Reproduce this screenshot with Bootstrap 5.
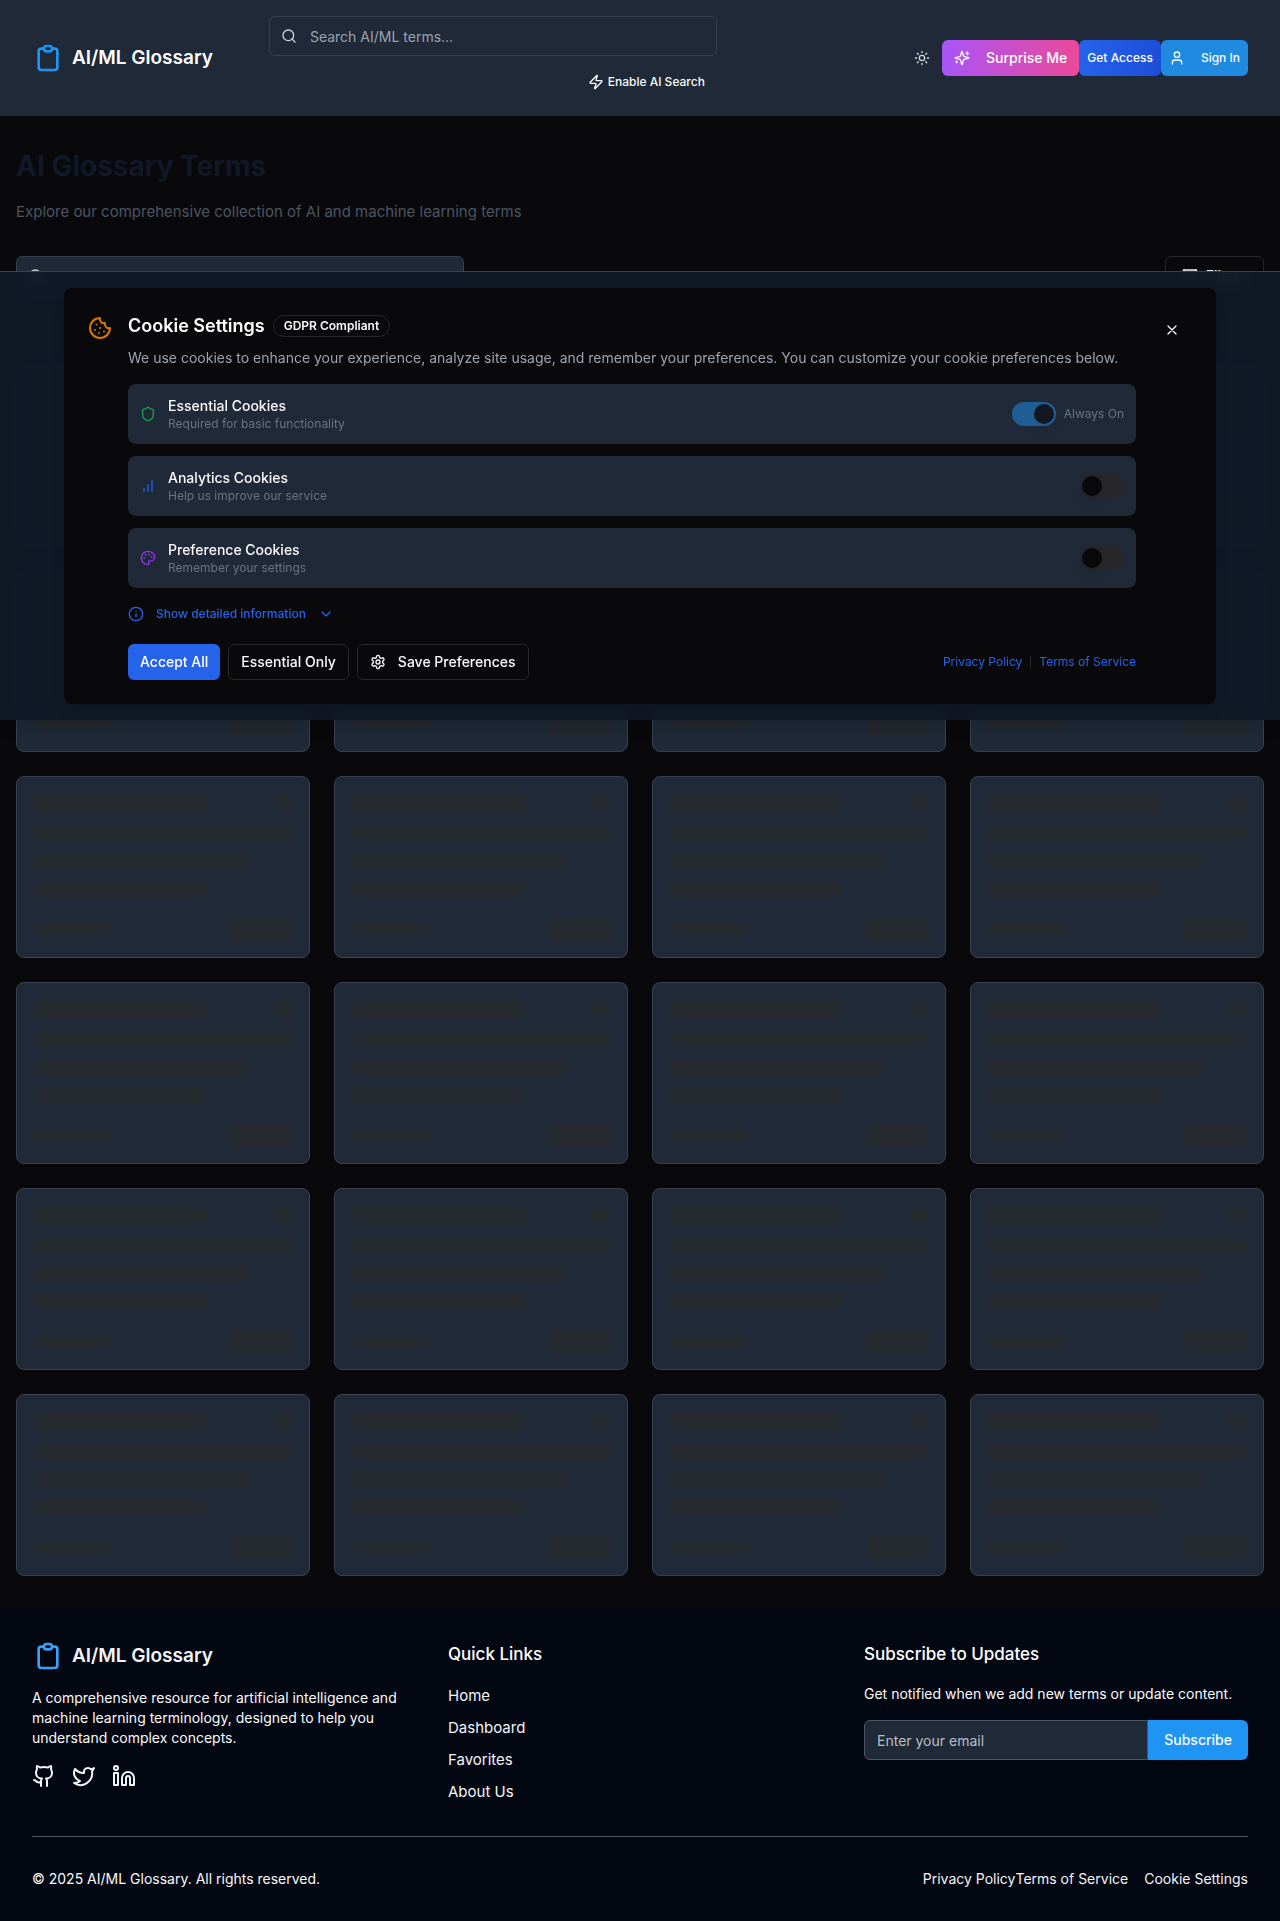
<!DOCTYPE html>
<html lang="en" data-bs-theme="dark">
<head>
<meta charset="utf-8">
<meta name="viewport" content="width=device-width, initial-scale=1">
<title>AI/ML Glossary</title>
<link href="https://cdn.jsdelivr.net/npm/bootstrap@5.3.0/dist/css/bootstrap.min.css" rel="stylesheet">
<style>
  body { background: #09090b; color: #fafafa; font-family: Inter, sans-serif; font-size: 15px; line-height: 24px; }
  a { text-decoration: none; }
  .ico { width: 16px; height: 16px; flex: none; fill: none; stroke: currentColor; stroke-width: 2; stroke-linecap: round; stroke-linejoin: round; }
  .ico-lg { width: 24px; height: 24px; }
  .ico-logo { width: 32px; height: 32px; color: #2094f3; }
  .gap-12 { gap: 12px; }
  .text-slate { color: #111827; }
  .text-dim { color: #4b5563; }
  .text-soft { color: #6b7280; }
  .text-calm { color: #9ca3af; }
  .site-header { background: #1f2937; padding: 16px 32px; }
  .header-search { flex: 0 1 448px; margin-left: 56px; }
  .search-box { position: relative; max-width: 448px; color: #d1d5db; }
  .search-box .ico { position: absolute; left: 12px; top: 12px; }
  .field { background: #1f2937; border: 1px solid #374151; border-radius: 6px; color: #fafafa; height: 40px; font-size: 14px; line-height: 20px; padding: 8px 12px; }
  .field:focus { background: #1f2937; }
  .search-box .field { padding-left: 40px; }
  .field::placeholder { color: #9ca3af; }
  .tool { display: inline-flex; align-items: center; justify-content: center; height: 36px; padding: 0 12px; border-radius: 6px; border: 0; background: none; color: #fafafa; font-size: 14px; line-height: 20px; font-weight: 500; white-space: nowrap; }
  .tool-sm { font-size: 12px; padding: 0 8px; }
  .tool-theme { color: #d1d5db; }
  .tool-line { border: 1px solid #27272a; }
  .tool-surprise { background: linear-gradient(90deg, #a855f7, #ec4899); color: #fff; }
  .tool-access { background: linear-gradient(90deg, #2563eb, #1d4ed8); color: #fff; }
  .tool-sign { background: #208ae0; color: #f8fafc; }
  .tool-accept { background: #2563eb; color: #fff; }
  .t12 { font-size: 12px; line-height: 16px; }
  .t14 { font-size: 14px; line-height: 20px; }
  .t17 { font-size: 17px; line-height: 28px; }
  .t18 { font-size: 18px; line-height: 28px; }
  .t19 { font-size: 19px; line-height: 28px; }
  .t28 { font-size: 28px; line-height: 36px; }
  .page-main { padding: 32px 16px; }
  .toolbar { margin-bottom: 68px; }
  .term-card { background: #1f2937; border: 1px solid #374151; border-radius: 8px; padding: 16px; }
  .bone { background: #24282f; border-radius: 6px; height: 16px; }
  .bone-title { height: 20px; width: 67%; }
  .bone-dot { height: 20px; width: 20px; border-radius: 50%; }
  .bone-long { width: 83%; }
  .bone-mid { width: 67%; }
  .bone-tag { height: 12px; width: 80px; }
  .bone-btn { height: 24px; width: 64px; }
  .bone-foot { margin-top: 8px; }
  .consent { position: absolute; top: 271px; left: 0; right: 0; z-index: 10; padding: 16px; border-top: 1px solid #374151; background: rgba(17, 24, 39, .95); backdrop-filter: blur(8px); box-shadow: 0 10px 15px -3px rgba(0, 0, 0, .1); }
  .consent-panel { max-width: 1152px; background: #09090b; border-radius: 8px; padding: 24px; box-shadow: 0 10px 15px -3px rgba(0, 0, 0, .1); }
  .pill { border: 1px solid #27272a; border-radius: 999px; padding: 2px 10px; font-weight: 600; }
  .option { background: #1f2937; border-radius: 8px; padding: 12px; }
  .switch { appearance: none; width: 44px; height: 24px; margin: 0; padding: 2px; border-radius: 12px; background: #27272a; display: flex; flex: none; }
  .switch::before { content: ""; width: 20px; height: 20px; border-radius: 50%; background: #09090b; box-shadow: 0 10px 15px -3px rgba(0, 0, 0, .1); }
  .switch:checked { background: #2094f3; justify-content: flex-end; }
  .switch:disabled { opacity: .5; }
  .c-orange { color: #d97706; } .c-green { color: #16a34a; } .c-blue { color: #2563eb; } .c-purple { color: #9333ea; }
  .details-btn { height: 28px; }
  .bar { width: 1px; height: 12px; background: #27272a; }
  .site-footer { background: #030712; padding: 32px; }
  .foot-cols { --bs-gutter-x: 32px; }
  .site-footer a { color: #f3f4f6; }
  .site-footer .ico-logo { color: #3ba0f5; }
  .foot-field { background: #1f2937; border-color: #4b5563; border-radius: 6px 0 0 6px; }
  .foot-field::placeholder { color: #b9bec7; }
  .foot-btn { height: 40px; padding: 0 16px; border-radius: 0 6px 6px 0; background: #2094f3; color: #f8fafc; }
  .foot-end { border-top: 1px solid #4b5563; margin-top: 32px; padding-top: 32px; }
</style>
</head>
<body>
<svg class="d-none" xmlns="http://www.w3.org/2000/svg">
  <symbol id="i-clip" viewBox="0 0 24 24"><path d="M9 5H7a2 2 0 0 0-2 2v12a2 2 0 0 0 2 2h10a2 2 0 0 0 2-2V7a2 2 0 0 0-2-2h-2M9 5a2 2 0 0 0 2 2h2a2 2 0 0 0 2-2M9 5a2 2 0 0 1 2-2h2a2 2 0 0 1 2 2"/></symbol>
  <symbol id="i-search" viewBox="0 0 24 24"><circle cx="11" cy="11" r="8"/><path d="m21 21-4.300-4.300"/></symbol>
  <symbol id="i-zap" viewBox="0 0 24 24"><path d="M4 14a1 1 0 0 1-.78-1.630l9.900-10.200a.5.5 0 0 1 .86.46l-1.920 6.020A1 1 0 0 0 13 10h7a1 1 0 0 1 .78 1.630l-9.900 10.200a.5.5 0 0 1-.86-.46l1.920-6.020A1 1 0 0 0 11 14z"/></symbol>
  <symbol id="i-sun" viewBox="0 0 24 24"><circle cx="12" cy="12" r="4"/><path d="M12 2v2M12 20v2M4.930 4.930l1.410 1.410M17.660 17.660l1.410 1.410M2 12h2M20 12h2M6.340 17.660l-1.410 1.410M19.070 4.930l-1.410 1.410"/></symbol>
  <symbol id="i-spark" viewBox="0 0 24 24"><path d="M9.937 15.500A2 2 0 0 0 8.500 14.063l-6.135-1.582a.5.5 0 0 1 0-.962L8.500 9.936A2 2 0 0 0 9.937 8.500l1.582-6.135a.5.5 0 0 1 .963 0L14.063 8.500A2 2 0 0 0 15.500 9.937l6.135 1.581a.5.5 0 0 1 0 .964L15.500 14.063a2 2 0 0 0-1.437 1.437l-1.582 6.135a.5.5 0 0 1-.963 0zM20 3v4M22 5h-4M4 17v2M5 18H3"/></symbol>
  <symbol id="i-user" viewBox="0 0 24 24"><path d="M19 21v-2a4 4 0 0 0-4-4H9a4 4 0 0 0-4 4v2"/><circle cx="12" cy="7" r="4"/></symbol>
  <symbol id="i-filter" viewBox="0 0 24 24"><path d="M22 3H2l8 9.460V19l4 2v-8.540z"/></symbol>
  <symbol id="i-cookie" viewBox="0 0 24 24"><path d="M12 2a10 10 0 1 0 10 10 4 4 0 0 1-5-5 4 4 0 0 1-5-5M8.500 8.500v.01M16 15.500v.01M12 12v.01M11 17v.01M7 14v.01"/></symbol>
  <symbol id="i-x" viewBox="0 0 24 24"><path d="M18 6 6 18M6 6l12 12"/></symbol>
  <symbol id="i-shield" viewBox="0 0 24 24"><path d="M20 13c0 5-3.500 7.500-7.660 8.950a1 1 0 0 1-.67-.01C7.500 20.500 4 18 4 13V6a1 1 0 0 1 1-1c2 0 4.500-1.200 6.240-2.720a1.170 1.170 0 0 1 1.520 0C14.510 3.810 17 5 19 5a1 1 0 0 1 1 1z"/></symbol>
  <symbol id="i-chart" viewBox="0 0 24 24"><path d="M12 20V10M18 20V4M6 20v-4"/></symbol>
  <symbol id="i-palette" viewBox="0 0 24 24"><circle cx="13.5" cy="6.5" r=".5"/><circle cx="17.5" cy="10.5" r=".5"/><circle cx="8.5" cy="7.5" r=".5"/><circle cx="6.5" cy="12.5" r=".5"/><path d="M12 2C6.500 2 2 6.500 2 12s4.500 10 10 10c.926 0 1.648-.746 1.648-1.688 0-.437-.18-.835-.437-1.125-.29-.289-.438-.652-.438-1.125a1.640 1.640 0 0 1 1.668-1.668h1.996c3.051 0 5.555-2.503 5.555-5.554C21.965 6.012 17.461 2 12 2z"/></symbol>
  <symbol id="i-info" viewBox="0 0 24 24"><circle cx="12" cy="12" r="10"/><path d="M12 16v-4M12 8h.01"/></symbol>
  <symbol id="i-down" viewBox="0 0 24 24"><path d="m6 9 6 6 6-6"/></symbol>
  <symbol id="i-gear" viewBox="0 0 24 24"><path d="M12.220 2h-.44a2 2 0 0 0-2 2v.18a2 2 0 0 1-1 1.730l-.43.25a2 2 0 0 1-2 0l-.15-.08a2 2 0 0 0-2.730.73l-.22.38a2 2 0 0 0 .73 2.730l.15.1a2 2 0 0 1 1 1.720v.51a2 2 0 0 1-1 1.740l-.15.09a2 2 0 0 0-.73 2.730l.22.38a2 2 0 0 0 2.730.73l.15-.08a2 2 0 0 1 2 0l.43.25a2 2 0 0 1 1 1.730V20a2 2 0 0 0 2 2h.44a2 2 0 0 0 2-2v-.18a2 2 0 0 1 1-1.730l.43-.25a2 2 0 0 1 2 0l.15.08a2 2 0 0 0 2.730-.73l.22-.39a2 2 0 0 0-.73-2.730l-.15-.08a2 2 0 0 1-1-1.740v-.5a2 2 0 0 1 1-1.740l.15-.09a2 2 0 0 0 .73-2.730l-.22-.38a2 2 0 0 0-2.730-.73l-.15.08a2 2 0 0 1-2 0l-.43-.25a2 2 0 0 1-1-1.730V4a2 2 0 0 0-2-2z"/><circle cx="12" cy="12" r="3"/></symbol>
  <symbol id="i-github" viewBox="0 0 24 24"><path d="M15 22v-4a4.800 4.800 0 0 0-1-3.500c3 0 6-2 6-5.500.08-1.250-.27-2.480-1-3.500.28-1.150.28-2.350 0-3.500 0 0-1 0-3 1.500-2.640-.5-5.360-.5-8 0C6 2 5 2 5 2c-.3 1.150-.3 2.350 0 3.500A5.403 5.403 0 0 0 4 9c0 3.500 3 5.500 6 5.500-.39.49-.68 1.050-.85 1.650-.17.6-.22 1.230-.15 1.850v4M9 18c-4.510 2-5-2-7-2"/></symbol>
  <symbol id="i-twitter" viewBox="0 0 24 24"><path d="M22 4s-.7 2.100-2 3.400c1.600 10-9.400 17.300-18 11.600 2.200.1 4.400-.6 6-2C3 15.500.5 9.600 3 5c2.200 2.600 5.600 4.100 9 4-.9-4.200 4-6.600 7-3.800 1.100 0 3-1.200 3-1.200z"/></symbol>
  <symbol id="i-linkedin" viewBox="0 0 24 24"><path d="M16 8a6 6 0 0 1 6 6v7h-4v-7a2 2 0 0 0-4 0v7h-4v-7a6 6 0 0 1 6-6z"/><path d="M2 9h4v12H2z"/><circle cx="4" cy="4" r="2"/></symbol>
</svg>

<header class="site-header d-flex align-items-center">
  <a href="#" class="d-flex align-items-center gap-2 text-white t19 fw-semibold text-nowrap"><svg class="ico ico-logo"><use href="#i-clip"/></svg>AI/ML Glossary</a>
  <div class="header-search">
    <div class="search-box">
      <svg class="ico"><use href="#i-search"/></svg>
      <input type="search" class="form-control field" placeholder="Search AI/ML terms..." aria-label="Search AI/ML terms">
    </div>
    <div class="d-flex justify-content-end mt-2">
      <button type="button" class="tool t12 gap-1"><svg class="ico"><use href="#i-zap"/></svg>Enable AI Search</button>
    </div>
  </div>
  <div class="d-flex align-items-center ms-auto">
    <button type="button" class="tool tool-theme" aria-label="Toggle theme"><svg class="ico"><use href="#i-sun"/></svg></button>
    <button type="button" class="tool tool-surprise gap-3"><svg class="ico"><use href="#i-spark"/></svg>Surprise Me</button>
    <button type="button" class="tool tool-sm tool-access">Get Access</button>
    <button type="button" class="tool tool-sm tool-sign gap-3"><svg class="ico"><use href="#i-user"/></svg>Sign In</button>
  </div>
</header>

<main class="page-main">
  <h1 class="t28 fw-bold text-slate mb-3">AI Glossary Terms</h1>
  <p class="text-dim mb-0 pb-2">Explore our comprehensive collection of AI and machine learning terms</p>
  <div class="toolbar d-flex justify-content-between mt-4">
    <div class="search-box flex-fill">
      <svg class="ico"><use href="#i-search"/></svg>
      <input type="search" class="form-control field" aria-label="Search terms">
    </div>
    <button type="button" class="tool tool-line px-3 gap-2 h-auto"><svg class="ico"><use href="#i-filter"/></svg>Filters</button>
  </div>
  <div class="row row-cols-1 row-cols-sm-2 row-cols-lg-4 g-4" id="cards"></div>
</main>

<section class="consent" aria-label="Cookie Settings">
  <div class="consent-panel mx-auto d-flex align-items-start gap-3">
    <svg class="ico ico-lg c-orange mt-1"><use href="#i-cookie"/></svg>
    <div class="flex-fill">
      <div class="d-flex align-items-center gap-2 mb-2">
        <h2 class="t18 fw-semibold mb-0">Cookie Settings</h2>
        <span class="pill t12">GDPR Compliant</span>
      </div>
      <p class="t14 text-calm mb-3">We use cookies to enhance your experience, analyze site usage, and remember your preferences. You can customize your cookie preferences below.</p>
      <div class="d-flex flex-column gap-12">
        <div class="option d-flex align-items-center gap-12">
          <svg class="ico c-green"><use href="#i-shield"/></svg>
          <label for="ck-essential" class="flex-fill"><span class="d-block t14 fw-medium">Essential Cookies</span><span class="d-block t12 text-soft">Required for basic functionality</span></label>
          <div class="d-flex align-items-center gap-2"><input type="checkbox" role="switch" class="switch" id="ck-essential" checked disabled><span class="t12 text-soft">Always On</span></div>
        </div>
        <div class="option d-flex align-items-center gap-12">
          <svg class="ico c-blue"><use href="#i-chart"/></svg>
          <label for="ck-analytics" class="flex-fill"><span class="d-block t14 fw-medium">Analytics Cookies</span><span class="d-block t12 text-soft">Help us improve our service</span></label>
          <input type="checkbox" role="switch" class="switch" id="ck-analytics">
        </div>
        <div class="option d-flex align-items-center gap-12">
          <svg class="ico c-purple"><use href="#i-palette"/></svg>
          <label for="ck-preference" class="flex-fill"><span class="d-block t14 fw-medium">Preference Cookies</span><span class="d-block t12 text-soft">Remember your settings</span></label>
          <input type="checkbox" role="switch" class="switch" id="ck-preference">
        </div>
        <button type="button" class="tool t12 details-btn c-blue px-0 gap-12 align-self-start"><svg class="ico"><use href="#i-info"/></svg>Show detailed information<svg class="ico"><use href="#i-down"/></svg></button>
      </div>
      <div class="d-flex flex-wrap align-items-center gap-2 mt-3">
        <button type="button" class="tool tool-accept">Accept All</button>
        <button type="button" class="tool tool-line">Essential Only</button>
        <button type="button" class="tool tool-line gap-12"><svg class="ico"><use href="#i-gear"/></svg>Save Preferences</button>
        <div class="d-flex align-items-center gap-2 t12 ms-auto"><a href="#" class="c-blue">Privacy Policy</a><span class="bar"></span><a href="#" class="c-blue">Terms of Service</a></div>
      </div>
    </div>
    <button type="button" class="tool" aria-label="Close"><svg class="ico"><use href="#i-x"/></svg></button>
  </div>
</section>

<footer class="site-footer">
  <div class="foot-cols row row-cols-1 row-cols-md-3">
    <div class="col">
      <a href="#" class="d-flex align-items-center gap-2 t19 fw-semibold mb-3"><svg class="ico ico-logo"><use href="#i-clip"/></svg>AI/ML Glossary</a>
      <p class="t14 mb-3">A comprehensive resource for artificial intelligence and machine learning terminology, designed to help you understand complex concepts.</p>
      <div class="d-flex gap-3">
        <a href="#" class="d-flex" aria-label="GitHub"><svg class="ico ico-lg"><use href="#i-github"/></svg></a>
        <a href="#" class="d-flex" aria-label="Twitter"><svg class="ico ico-lg"><use href="#i-twitter"/></svg></a>
        <a href="#" class="d-flex" aria-label="LinkedIn"><svg class="ico ico-lg"><use href="#i-linkedin"/></svg></a>
      </div>
    </div>
    <div class="col">
      <h3 class="t17 fw-medium mb-3">Quick Links</h3>
      <ul class="list-unstyled d-flex flex-column gap-2 mb-0">
        <li><a href="#">Home</a></li>
        <li><a href="#">Dashboard</a></li>
        <li><a href="#">Favorites</a></li>
        <li><a href="#">About Us</a></li>
      </ul>
    </div>
    <div class="col">
      <h3 class="t17 fw-medium mb-3">Subscribe to Updates</h3>
      <p class="t14 mb-3">Get notified when we add new terms or update content.</p>
      <form class="d-flex">
        <input type="email" class="form-control field foot-field" placeholder="Enter your email" aria-label="Email address">
        <button type="button" class="tool foot-btn">Subscribe</button>
      </form>
    </div>
  </div>
  <div class="foot-end t14 d-flex flex-wrap justify-content-between">
    <span>© 2025 AI/ML Glossary. All rights reserved.</span>
    <div class="d-flex"><a href="#">Privacy Policy</a><a href="#">Terms of Service</a><a href="#" class="ms-3">Cookie Settings</a></div>
  </div>
</footer>

<script src="https://cdn.jsdelivr.net/npm/bootstrap@5.3.0/dist/js/bootstrap.bundle.min.js"></script>
<script>
  // Placeholder cards shown while the terms load
  document.getElementById('cards').innerHTML = Array(24).fill(`
    <div class="col"><div class="term-card d-flex flex-column gap-12">
      <div class="d-flex justify-content-between"><div class="bone bone-title"></div><div class="bone bone-dot"></div></div>
      <div class="bone"></div><div class="bone bone-long"></div><div class="bone bone-mid"></div>
      <div class="bone-foot d-flex justify-content-between align-items-center"><div class="bone bone-tag"></div><div class="bone bone-btn"></div></div>
    </div></div>`).join('');
</script>
</body>
</html>
